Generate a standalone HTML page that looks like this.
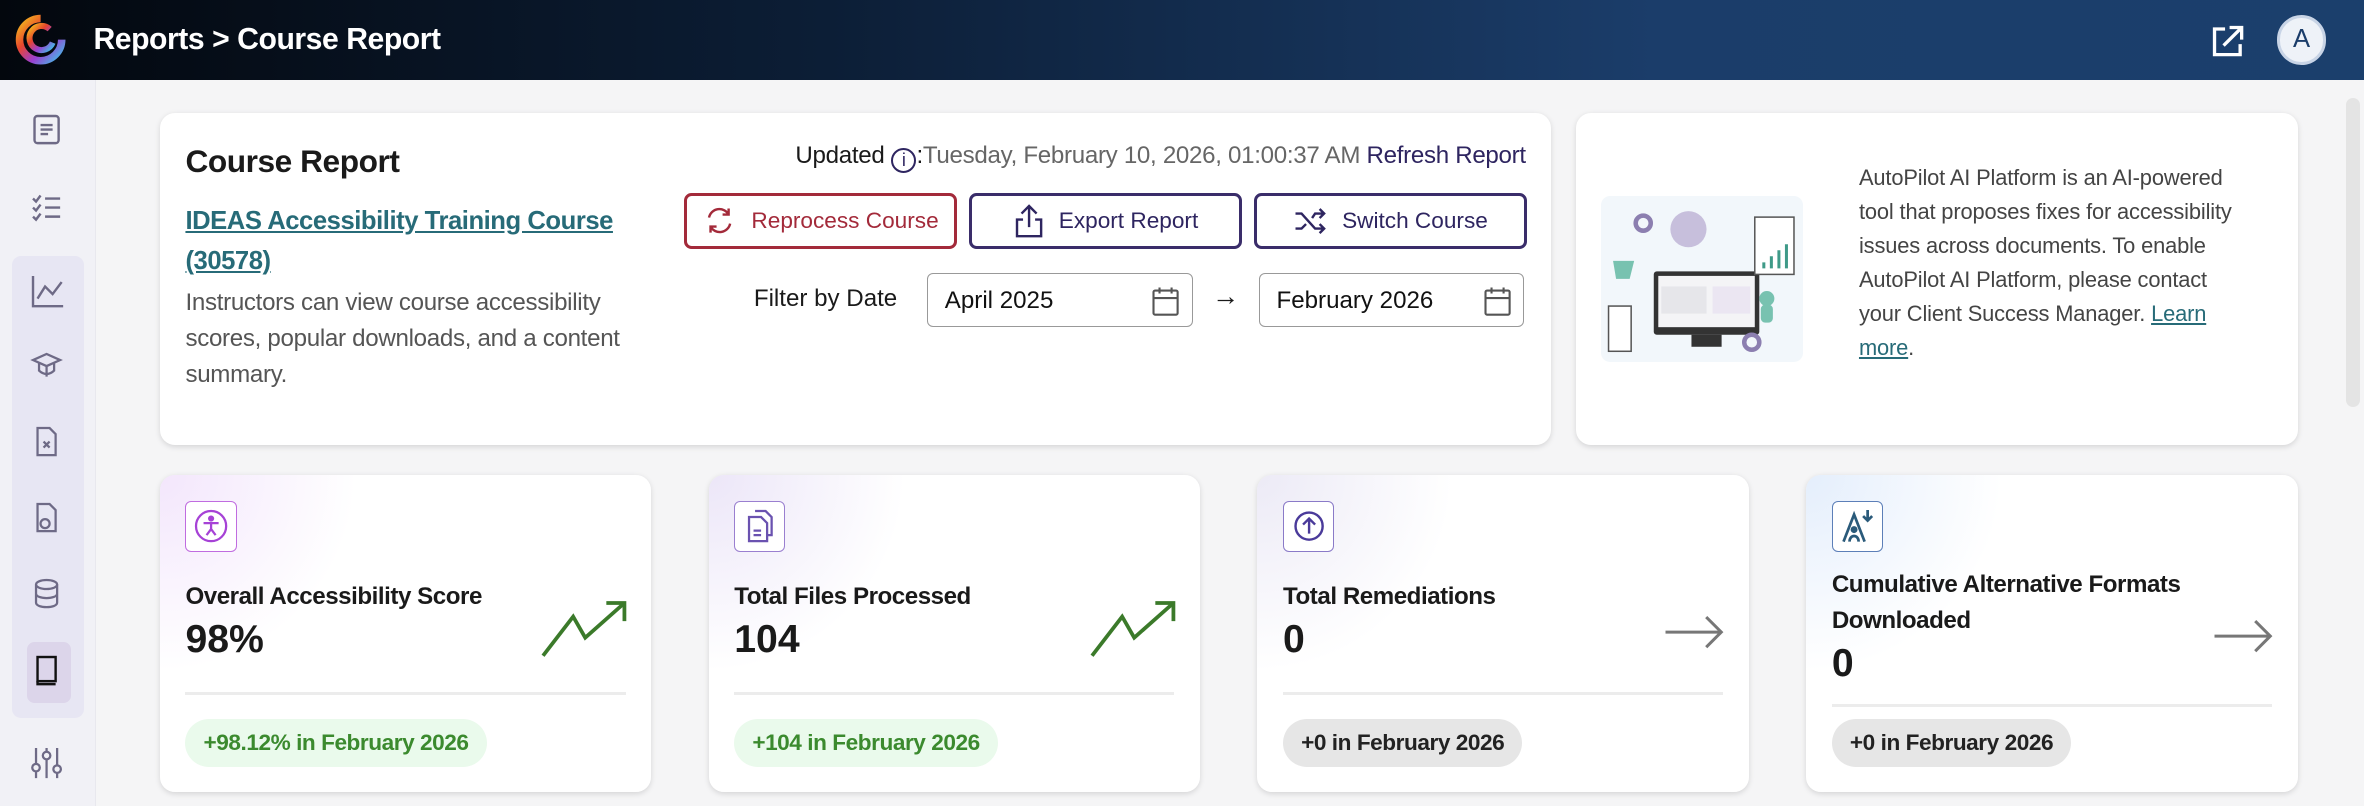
<!DOCTYPE html>
<html><head><meta charset="utf-8"><style>
*{box-sizing:border-box;margin:0;padding:0}
html,body{width:2364px;height:806px;overflow:hidden;background:#f5f5f6}
#w{zoom:1.5077;width:1568px;height:535px;position:relative;font-family:"Liberation Sans",Arial,sans-serif;color:#1a1a1a}
.hdr{position:absolute;left:0;top:0;width:1568px;height:53px;background:linear-gradient(90deg,#03070d 0%,#0c1e36 35%,#1b3d6a 70%,#1b3f6c 100%)}
.hdr .t{position:absolute;left:62px;top:15px;color:#fff;font-size:20px;font-weight:bold;letter-spacing:-0.3px}
.side{position:absolute;left:0;top:53px;width:64px;height:482px;background:#f1f1f6;border-right:1px solid #e8e8ee}
.grp{position:absolute;left:8px;top:117px;width:48px;height:306px;background:#e7e6f3;border-radius:6px}
.act{position:absolute;left:18px;top:373px;width:29px;height:40px;background:#dcd5ea;border-radius:5px}
.si{position:absolute;left:20px}
.card{position:absolute;background:#fff;border-radius:10px;box-shadow:0 1px 4px rgba(0,0,0,.13)}
.btn{position:absolute;top:53px;height:37px;border:2px solid #3a2d6a;border-radius:5px;color:#2e2560;font-size:15px;display:flex;align-items:center;justify-content:center;gap:10px}
.inp{position:absolute;top:106px;height:36px;border:1px solid #999;border-radius:4px;font-size:16px;padding:9px 11px;color:#111}
.stat{top:315px;width:326px;height:210px}
.ib{position:absolute;left:17px;top:17px;width:34px;height:34px;border:1px solid #a58bd6;border-radius:4px;display:flex;align-items:center;justify-content:center;background:#fff}
.st{position:absolute;left:17px;font-size:16px;font-weight:bold;letter-spacing:-0.3px;line-height:24px}
.sv{position:absolute;left:17px;font-size:26px;font-weight:bold}
.dv{position:absolute;left:17px;right:17px;height:2px;background:#ececec}
.bd{position:absolute;left:17px;top:162px;height:32px;border-radius:16px;font-size:15px;font-weight:bold;padding:7px 12px;letter-spacing:-0.3px}
.g{background:#eafaec;color:#3b8a2e}
.n{background:#e6e6e6;color:#222}
</style></head><body><div id="w">
<div class="hdr">
<svg style="position:absolute;left:10px;top:9px" width="34" height="34" viewBox="0 0 34 34"><defs><linearGradient id="lg" x1="0" y1="0" x2="1" y2="1"><stop offset="0" stop-color="#f4c21b"/><stop offset=".35" stop-color="#e8452e"/><stop offset=".65" stop-color="#9b3fd0"/><stop offset="1" stop-color="#3cc5e8"/></linearGradient></defs><path d="M17 3a14 14 0 1 0 14 14" fill="none" stroke="url(#lg)" stroke-width="5"/><path d="M23 10a8 8 0 1 0 2 9" fill="none" stroke="url(#lg)" stroke-width="4"/></svg>
<div class="t">Reports &gt; Course Report</div>
<svg style="position:absolute;left:1466px;top:15px" width="24" height="24" viewBox="0 0 24 24" fill="none" stroke="#fff" stroke-width="2.2"><path d="M10 4H3v17h17v-7"/><path d="M13 3h8v8M21 3L9 15"/></svg>
<div style="position:absolute;left:1510px;top:10px;width:33px;height:33px;border-radius:50%;background:#eef2f8;border:2px solid #c8d4e6;color:#1b3d6a;font-size:17px;text-align:center;line-height:29px">A</div>
</div>
<div class="side"><div class="grp"></div><div class="act"></div>
<svg class="si" style="top:22px" width="22" height="22" viewBox="0 0 22 22" fill="none" stroke="#6e6a86" stroke-width="1.6"><rect x="3" y="2" width="16" height="18" rx="2"/><path d="M7 8h8M7 11h8M7 14h5"/></svg>
<svg class="si" style="top:74px" width="22" height="22" viewBox="0 0 22 22" fill="none" stroke="#6e6a86" stroke-width="1.6"><path d="M2 5l2 2 3-4M2 11l2 2 3-4M2 17l2 2 3-4M10 5h10M10 11h10M10 17h10"/></svg>
<svg class="si" style="top:128px" width="24" height="24" viewBox="0 0 24 24" fill="none" stroke="#6e6a86" stroke-width="1.6"><path d="M2 2v20h20M5 17l5-8 5 5 6-8"/></svg>
<svg class="si" style="top:178px" width="22" height="22" viewBox="0 0 22 22" fill="none" stroke="#6e6a86" stroke-width="1.5"><path d="M2 8l9-4 9 4-9 4zM6 10v5c3 3 7 3 10 0v-5M11 12v7"/></svg>
<svg class="si" style="top:229px" width="22" height="22" viewBox="0 0 22 22" fill="none" stroke="#6e6a86" stroke-width="1.5"><path d="M5 2h8l4 4v14H5z"/><path d="M9 11l4 4M13 11l-4 4"/></svg>
<svg class="si" style="top:279px" width="22" height="22" viewBox="0 0 22 22" fill="none" stroke="#6e6a86" stroke-width="1.5"><path d="M5 2h8l4 4v14H5z"/><circle cx="10" cy="15" r="3"/></svg>
<svg class="si" style="top:330px" width="22" height="22" viewBox="0 0 22 22" fill="none" stroke="#6e6a86" stroke-width="1.5"><ellipse cx="11" cy="5" rx="7" ry="3"/><path d="M4 5v12c0 4 14 4 14 0V5M4 11c0 4 14 4 14 0"/></svg>
<svg class="si" style="top:381px" width="22" height="22" viewBox="0 0 22 22" fill="none" stroke="#111" stroke-width="1.6"><rect x="5" y="2" width="12" height="16"/><path d="M5 18v2h12"/></svg>
<svg class="si" style="top:441px" width="22" height="24" viewBox="0 0 22 24" fill="none" stroke="#6e6a86" stroke-width="1.5"><path d="M4 2v20M11 2v20M18 2v20"/><circle cx="4" cy="15" r="2.5" fill="#f1f1f6"/><circle cx="11" cy="7" r="2.5" fill="#f1f1f6"/><circle cx="18" cy="16" r="2.5" fill="#f1f1f6"/></svg>
</div>
<div style="position:absolute;left:1556px;top:65px;width:9px;height:205px;background:#e4e4e4;border-radius:5px"></div>

<div class="card" style="left:106px;top:75px;width:923px;height:220px">
<div style="position:absolute;left:17px;top:20px;font-size:21px;font-weight:bold;letter-spacing:-0.3px">Course Report</div>
<div style="position:absolute;left:17px;top:58px;width:300px;font-size:17px;font-weight:bold;color:#276b78;text-decoration:underline;line-height:27px;letter-spacing:-0.3px">IDEAS Accessibility Training Course (30578)</div>
<div style="position:absolute;left:17px;top:114px;width:315px;font-size:16px;color:#555;line-height:24px;letter-spacing:-0.2px">Instructors can view course accessibility scores, popular downloads, and a content summary.</div>
<div style="position:absolute;right:17px;top:19px;font-size:16px;white-space:nowrap;letter-spacing:-0.2px">Updated <span style="display:inline-block;width:17px;height:17px;border:1.5px solid #2e2560;border-radius:50%;text-align:center;font-size:12px;line-height:14px;vertical-align:-2px;color:#2e2560">i</span>:<span style="color:#666">Tuesday, February 10, 2026, 01:00:37 AM</span> <span style="color:#2e2560;font-size:16px">Refresh Report</span></div>
<div class="btn" style="left:348px;width:181px;border-color:#a32a3a;color:#a32a3a"><svg width="22" height="22" viewBox="0 0 22 22" fill="none" stroke="#a32a3a" stroke-width="1.6"><path d="M4 9a7 7 0 0 1 13-2M18 13a7 7 0 0 1-13 2M17 3v4h-4M5 19v-4h4"/></svg>Reprocess Course</div>
<div class="btn" style="left:537px;width:181px"><svg width="20" height="24" viewBox="0 0 20 24" fill="none" stroke="#2e2560" stroke-width="1.6"><path d="M10 2v14M5 7l5-5 5 5M6 11H2v11h16V11h-4"/></svg>Export Report</div>
<div class="btn" style="left:726px;width:181px"><svg width="22" height="20" viewBox="0 0 22 20" fill="none" stroke="#2e2560" stroke-width="1.6"><path d="M1 5h4l9 10h6M1 15h4l3-3M12 8l2-3h6M17 2l3 3-3 3M17 12l3 3-3 3"/></svg>Switch Course</div>
<div style="position:absolute;left:394px;top:114px;font-size:16px">Filter by Date</div>
<div class="inp" style="left:509px;width:176px">April 2025<svg style="position:absolute;right:8px;top:8px" width="18" height="20" viewBox="0 0 18 20" fill="none" stroke="#555" stroke-width="1.4"><rect x="1" y="3" width="16" height="16" rx="1"/><path d="M1 8h16M5 1v4M13 1v4"/></svg></div>
<div style="position:absolute;left:698px;top:111px;font-size:18px">→</div>
<div class="inp" style="left:729px;width:176px">February 2026<svg style="position:absolute;right:8px;top:8px" width="18" height="20" viewBox="0 0 18 20" fill="none" stroke="#555" stroke-width="1.4"><rect x="1" y="3" width="16" height="16" rx="1"/><path d="M1 8h16M5 1v4M13 1v4"/></svg></div>
</div>

<div class="card" style="left:1045px;top:75px;width:479px;height:220px">
<div style="position:absolute;left:17px;top:55px;width:134px;height:110px;background:#f2f7fb;border-radius:6px">
<svg width="134" height="110" viewBox="0 0 134 110"><rect x="35" y="50" width="70" height="42" fill="#333" rx="2"/><rect x="38" y="53" width="64" height="34" fill="#f4f4f6"/><rect x="60" y="92" width="20" height="8" fill="#333"/><rect x="40" y="60" width="30" height="18" fill="#e6e6ea"/><rect x="74" y="60" width="25" height="18" fill="#ebe6f2"/><circle cx="58" cy="22" r="12" fill="#c7bfdc"/><rect x="102" y="14" width="26" height="38" fill="#fff" stroke="#555"/><path d="M108 44v4M113 40v8M118 36v12M123 32v16" stroke="#3f9a88" stroke-width="2"/><rect x="5" y="73" width="15" height="30" fill="#fff" stroke="#555"/><path d="M8 43h14l-3 12H10z" fill="#78c2b0"/><circle cx="110" cy="68" r="5" fill="#78c2b0"/><rect x="106" y="72" width="8" height="12" rx="3" fill="#78c2b0"/><circle cx="28" cy="18" r="5" fill="none" stroke="#8c7fb0" stroke-width="3"/><circle cx="100" cy="97" r="5" fill="none" stroke="#8c7fb0" stroke-width="3"/></svg></div>
<div style="position:absolute;left:188px;top:32px;width:262px;font-size:14.5px;color:#444;line-height:22.5px;letter-spacing:-0.1px">AutoPilot AI Platform is an AI-powered tool that proposes fixes for accessibility issues across documents. To enable AutoPilot AI Platform, please contact your Client Success Manager. <span style="color:#276b78;text-decoration:underline">Learn more</span>.</div>
</div>

<div class="card stat" style="left:106px;background:radial-gradient(circle at 0 0,#f3e6fc 0,#fff 130px)">
<div class="ib" style="border-color:#c06ce0"><svg width="24" height="24" viewBox="0 0 24 24" fill="none" stroke="#a642d6" stroke-width="1.5"><circle cx="12" cy="12" r="10"/><circle cx="12" cy="7" r="1.3" fill="#a642d6"/><path d="M7 10h10M12 10v4l-3 4M12 14l3 4"/></svg></div>
<div class="st" style="top:69px">Overall Accessibility Score</div><div class="sv" style="top:95px">98%</div>
<svg style="position:absolute;left:252px;top:83px" width="58" height="40" viewBox="0 0 58 40" fill="none" stroke="#3b7a2a" stroke-width="2.5"><path d="M2 37l20-26 8 14L56 2M44 2h12v12"/></svg>
<div class="dv" style="top:144px"></div><div class="bd g">+98.12% in February 2026</div></div>

<div class="card stat" style="left:470px;background:radial-gradient(circle at 0 0,#ece6f8 0,#fff 130px)">
<div class="ib" style="border-color:#9a7fd0"><svg width="22" height="24" viewBox="0 0 22 24" fill="none" stroke="#6a52b0" stroke-width="1.5"><path d="M8 2h7l4 4v12h-3"/><path d="M4 6h8l4 4v12H4z"/><path d="M7 15h5M7 18h5"/></svg></div>
<div class="st" style="top:69px">Total Files Processed</div><div class="sv" style="top:95px">104</div>
<svg style="position:absolute;left:252px;top:83px" width="58" height="40" viewBox="0 0 58 40" fill="none" stroke="#3b7a2a" stroke-width="2.5"><path d="M2 37l20-26 8 14L56 2M44 2h12v12"/></svg>
<div class="dv" style="top:144px"></div><div class="bd g">+104 in February 2026</div></div>

<div class="card stat" style="left:834px;background:radial-gradient(circle at 0 0,#eceaf6 0,#fff 130px)">
<div class="ib" style="border-color:#8a7ac8"><svg width="24" height="24" viewBox="0 0 24 24" fill="none" stroke="#4a3a9a" stroke-width="1.6"><circle cx="12" cy="12" r="9"/><path d="M12 17V7M8 11l4-4 4 4"/></svg></div>
<div class="st" style="top:69px">Total Remediations</div><div class="sv" style="top:95px">0</div>
<svg style="position:absolute;left:270px;top:92px" width="40" height="24" viewBox="0 0 40 24" fill="none" stroke="#777" stroke-width="2"><path d="M1 12h37M28 2l10 10-10 10"/></svg>
<div class="dv" style="top:144px"></div><div class="bd n">+0 in February 2026</div></div>

<div class="card stat" style="left:1198px;background:radial-gradient(circle at 0 0,#e4eefc 0,#fff 130px)">
<div class="ib" style="border-color:#5c7fb8"><svg width="24" height="26" viewBox="0 0 24 26" fill="none" stroke="#2a5a7a" stroke-width="1.8"><path d="M3 23L10 5l7 18M7 23c0-5 6-5 6 0"/><circle cx="10" cy="15" r="1.4" fill="#2a5a7a"/><path d="M19 2v7M16 6l3 3 3-3"/></svg></div>
<div class="st" style="top:61px;width:240px">Cumulative Alternative Formats Downloaded</div><div class="sv" style="top:111px">0</div>
<svg style="position:absolute;left:270px;top:95px" width="40" height="24" viewBox="0 0 40 24" fill="none" stroke="#777" stroke-width="2"><path d="M1 12h37M28 2l10 10-10 10"/></svg>
<div class="dv" style="top:152px"></div><div class="bd n">+0 in February 2026</div></div>
</div></body></html>
